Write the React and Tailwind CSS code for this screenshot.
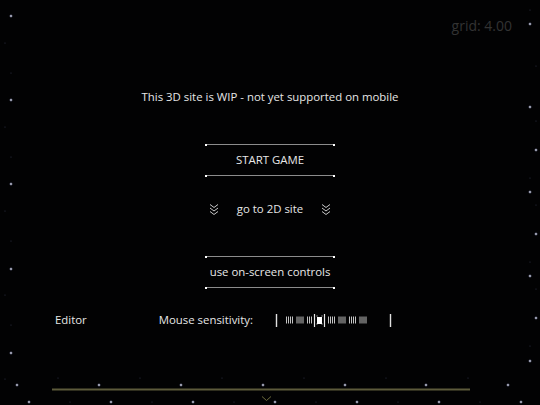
import React from "react"

const font = { fontFamily: '"Open Sans", "Liberation Sans", sans-serif' }

// background point grid, as seen from the camera
const bright = [
  [11, 16], [11, 100], [11, 184], [11, 269], [11, 353],
  [530, 24], [530, 107], [536, 150], [530, 192], [536, 234], [530, 276], [536, 318], [530, 361],
  [17, 385], [99, 385], [181, 385], [263, 385], [345, 385], [426, 385], [508, 385],
  [29, 402], [111, 402], [193, 402], [275, 402], [357, 402], [439, 402], [521, 402],
]
const dim = [
  [11, 73], [11, 157], [11, 241], [11, 325], [5, 43], [5, 127], [5, 211], [5, 295], [5, 379],
  [530, 10], [530, 178], [530, 262], [530, 346], [536, 66], [536, 121], [536, 205], [536, 289],
  [70, 402], [152, 402], [234, 402], [316, 402], [398, 402], [480, 402],
  [58, 378], [140, 378], [222, 378], [304, 378], [386, 378], [468, 378],
]

const Field = () => (
  <svg className="absolute inset-0" width="540" height="405">
    {dim.map(([x, y], i) => (
      <circle key={"d" + i} cx={x} cy={y} r="0.6" fill="#33364a" />
    ))}
    {bright.map(([x, y], i) => (
      <g key={"b" + i}>
        <path d={`M${x - 2} ${y}h4M${x} ${y - 2}v4`} stroke="#5a5f78" strokeWidth="0.6" />
        <circle cx={x} cy={y} r="0.9" fill="#c8ccdf" />
      </g>
    ))}
    <rect x="52" y="388.5" width="418" height="2" fill="#5c5a3b" />
    <path d="M262 396.5l4.5 4 4.5-4" stroke="#6b6a3c" strokeWidth="1" fill="none" />
  </svg>
)

const Rule = () => (
  <div className="relative h-px w-full bg-[#8c8c8c]">
    <span className="absolute -left-px top-[-0.5px] h-[2px] w-[2px] bg-white" />
    <span className="absolute -right-px top-[-0.5px] h-[2px] w-[2px] bg-white" />
  </div>
)

const FramedButton = ({ label }) => (
  <div className="flex w-[128px] flex-col">
    <Rule />
    <div className="flex h-[30px] items-center justify-center text-[11.4px] text-[#e8e8e8]">{label}</div>
    <Rule />
  </div>
)

const Chevrons = () => (
  <svg width="10" height="12" viewBox="0 0 10 12" fill="none" stroke="#c8c8c8" strokeWidth="1">
    <path d="M1 1.5l4 3 4-3M1 5l4 3 4-3M1 8.5l4 3 4-3" />
  </svg>
)

const Slider = () => {
  const ticks = []
  for (let g = 0; g < 8; g++) {
    for (let t = 0; t < 4; t++) ticks.push(287 + g * 10.5 + t * 2)
  }
  return (
    <svg width="120" height="16" viewBox="274 312 120 16">
      <path d="M277.5 314v13M391.5 314v13" stroke="#e0e0e0" strokeWidth="1.4" />
      {ticks
        .filter((x) => x < 314 || x > 326)
        .map((x, i) => (
          <rect key={i} x={x} y="316.5" width="1" height="7" fill="#c4c4c4" />
        ))}
      <path d="M315.5 314v13M325.5 314v13" stroke="#e8e8e8" strokeWidth="1.2" />
      <path d="M317.5 316h1M317.5 324h1M322.5 316h1M322.5 324h1" stroke="#e8e8e8" strokeWidth="1" />
      <rect x="318" y="317" width="5" height="7" fill="#ffffff" />
    </svg>
  )
}

const App = () => {
  return (
    <div className="relative h-screen w-full overflow-hidden bg-[#020203]" style={font}>
      <Field />
      <div className="absolute right-[28px] top-[15px] text-[14px] text-[#333333]">grid: 4.00</div>

      <div className="relative flex flex-col items-center pt-[89px]">
        <p className="text-[11.4px] leading-4 text-[#e6e6e6]">This 3D site is WIP - not yet supported on mobile</p>

        <div className="mt-[39px]">
          <FramedButton label="START GAME" />
        </div>

        <div className="mt-[25px] flex w-[122px] items-center justify-between">
          <Chevrons />
          <span className="text-[11.4px] leading-4 text-[#e6e6e6]">go to 2D site</span>
          <Chevrons />
        </div>

        <div className="mt-[39px]">
          <FramedButton label="use on-screen controls" />
        </div>

        <div className="mt-[24px] flex w-full items-center text-[11.4px] leading-4 text-[#e6e6e6]">
          <span className="ml-[55px]">Editor</span>
          <span className="ml-[72px]">Mouse sensitivity:</span>
          <span className="ml-[20px] flex">
            <Slider />
          </span>
        </div>
      </div>
    </div>
  )
}

export default App
